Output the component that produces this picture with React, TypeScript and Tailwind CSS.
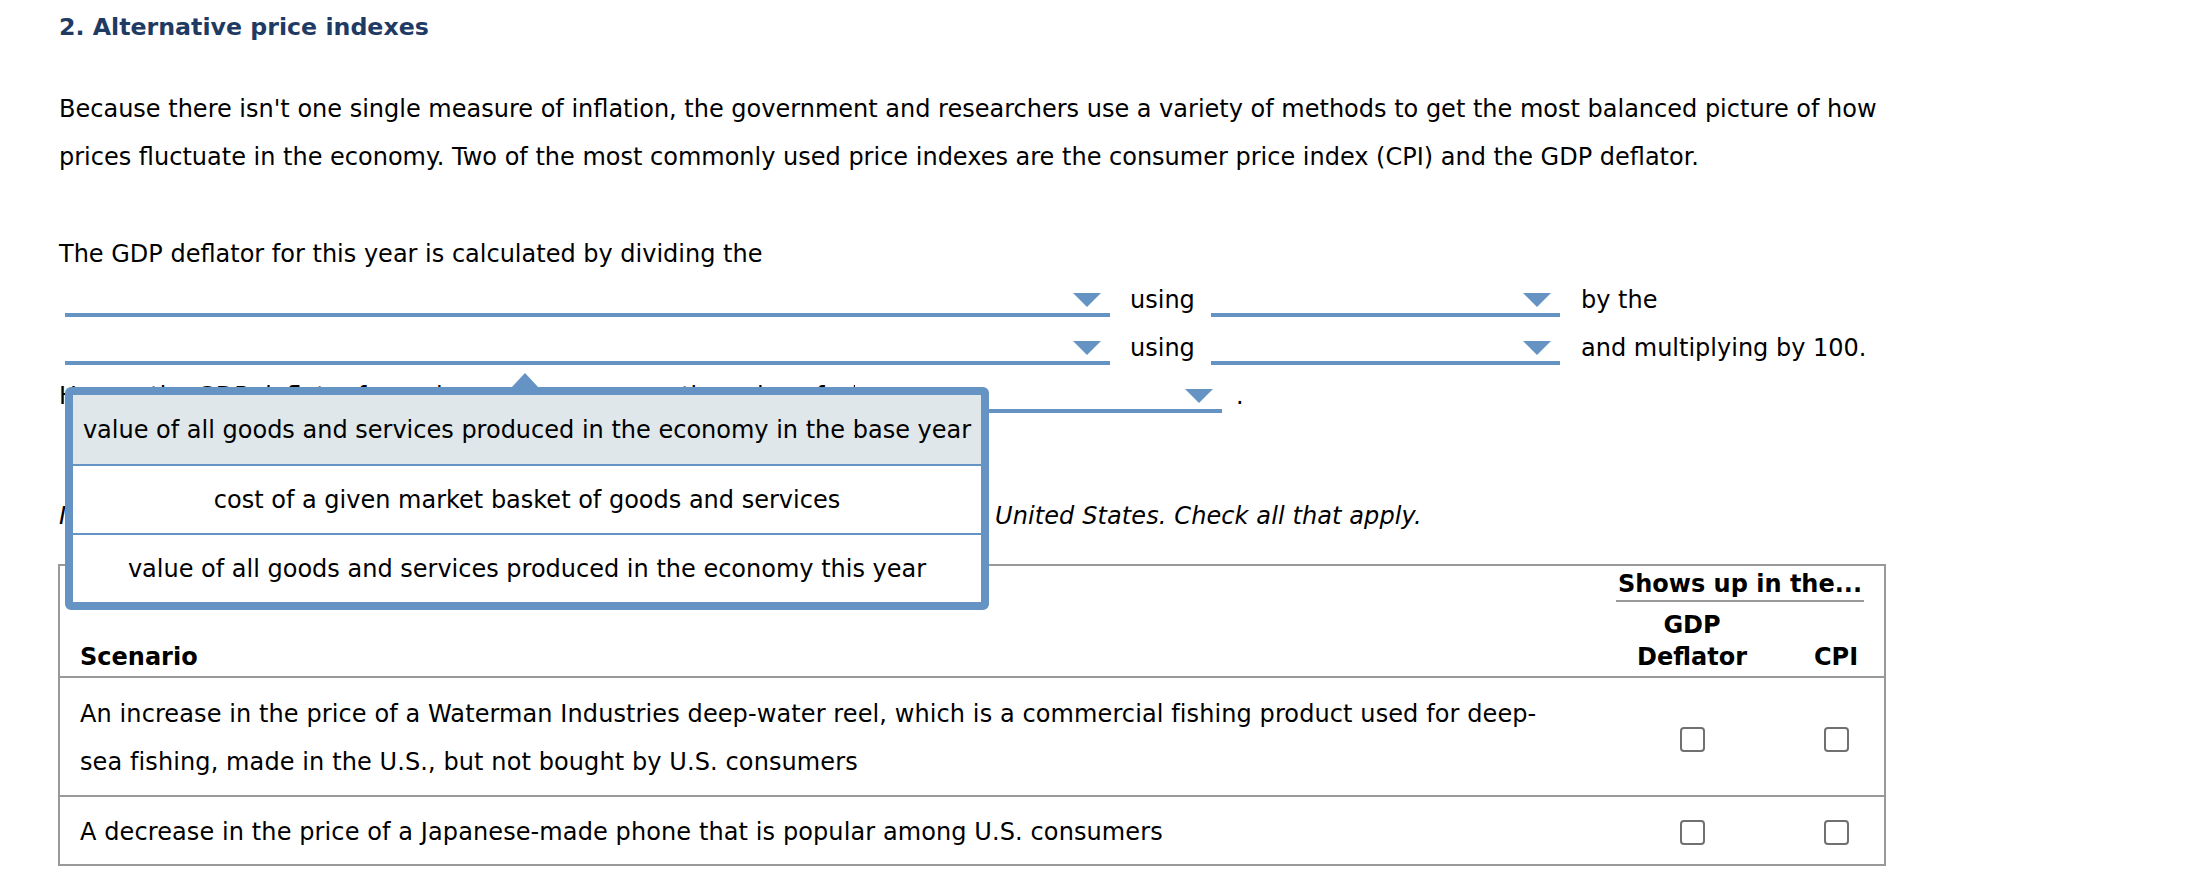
import React from "react";

const Arrow = () => (
  <svg width="28" height="14" viewBox="0 0 28 14" className="block">
    <polygon points="0,0 28,0 14,14" fill="#6593c4" />
  </svg>
);

const Dropdown = ({ className }: { className: string }) => (
  <div
    className={
      "h-[39px] shrink-0 border-b-4 border-[#6593c4] flex items-end justify-end pr-[9px] pb-[6px] " +
      className
    }
  >
    <Arrow />
  </div>
);

const Checkbox = () => (
  <div className="w-[25px] h-[25px] border-2 border-[#707070] rounded-[4px] bg-white" />
);

export default function App() {
  return (
    <div className="relative w-[2200px] h-[878px] overflow-hidden bg-white text-black font-['DejaVu_Sans',sans-serif] text-[24px]">
      <div className="pl-[59px]">
        <h2 className="pt-[3px] leading-[48px] font-bold text-[23.7px] text-[#1f3b64]">
          2. Alternative price indexes
        </h2>

        <div className="mt-[34px] leading-[48px]">
          <div className="whitespace-nowrap">
            Because there isn't one single measure of inflation, the government and researchers use a variety of methods to get the most balanced picture of how
          </div>
          <div className="whitespace-nowrap">
            prices fluctuate in the economy. Two of the most commonly used price indexes are the consumer price index (CPI) and the GDP deflator.
          </div>
        </div>

        <div className="mt-[49px] leading-[48px]">
          The GDP deflator for this year is calculated by dividing the
        </div>

        <div className="flex h-[48px] items-start">
          <Dropdown className="ml-[6px] w-[1045px]" />
          <span className="ml-[20px] w-[81px] leading-[44px]">using</span>
          <Dropdown className="w-[349px]" />
          <span className="ml-[21px] leading-[44px] whitespace-nowrap">by the</span>
        </div>

        <div className="flex h-[48px] items-start">
          <Dropdown className="ml-[6px] w-[1045px]" />
          <span className="ml-[20px] w-[81px] leading-[44px]">using</span>
          <Dropdown className="w-[349px]" />
          <span className="ml-[21px] leading-[44px] whitespace-nowrap">
            and multiplying by 100.
          </span>
        </div>

        <div className="flex h-[48px] items-start">
          <span className="inline-block w-[796px] overflow-hidden whitespace-nowrap leading-[44px]">
            Hence, the GDP deflator for a given year compares the value of what is
          </span>
          <Dropdown className="ml-[18px] w-[349px]" />
          <span className="ml-[14px] leading-[44px]">.</span>
        </div>

        <div className="mt-[70px] leading-[48px] italic flex whitespace-nowrap">
          <span className="inline-block w-[930px] overflow-hidden">
            Indicate whether each of the following scenarios shows up in the GDP deflator or the CPI for the
          </span>
          <span className="ml-[6px] tracking-[0.1px]">United States. Check all that apply.</span>
        </div>

        <div className="mt-[24px] ml-[-1px] w-[1828px] border-2 border-[#999999]">
          <div className="grid grid-cols-[1fr_152px_96px] pl-[20px] pr-[20px] pt-[2px] pb-[3px] border-b-2 border-[#999999] font-bold">
            <div />
            <div className="col-span-2 text-center leading-[32px] border-b-2 border-[#999999] whitespace-nowrap">
              Shows up in the...
            </div>
            <div className="self-end leading-[32px]">Scenario</div>
            <div className="mt-[7px] text-center leading-[32px]">
              GDP
              <br />
              Deflator
            </div>
            <div className="self-end text-center pl-[40px] leading-[32px]">CPI</div>
          </div>

          <div className="grid grid-cols-[1fr_152px_96px] items-center pl-[20px] pr-[20px] pt-[12px] pb-[9px] border-b-2 border-[#999999]">
            <div className="leading-[48px] whitespace-nowrap tracking-[0.1px]">
              An increase in the price of a Waterman Industries deep-water reel, which is a commercial fishing product used for deep-
              <br />
              sea fishing, made in the U.S., but not bought by U.S. consumers
            </div>
            <div className="flex justify-center pt-[2px]">
              <Checkbox />
            </div>
            <div className="flex justify-center pl-[40px] pt-[2px]">
              <Checkbox />
            </div>
          </div>

          <div className="grid grid-cols-[1fr_152px_96px] items-center pl-[20px] pr-[20px] pt-[11px] pb-[8px]">
            <div className="leading-[48px] whitespace-nowrap tracking-[0.1px]">
              A decrease in the price of a Japanese-made phone that is popular among U.S. consumers
            </div>
            <div className="flex justify-center">
              <Checkbox />
            </div>
            <div className="flex justify-center pl-[40px]">
              <Checkbox />
            </div>
          </div>
        </div>
      </div>

      {/* Open dropdown menu overlay */}
      <svg
        width="28"
        height="15"
        viewBox="0 0 28 15"
        className="absolute left-[511px] top-[373px]"
      >
        <polygon points="14,0 28,15 0,15" fill="#6593c4" />
      </svg>
      <div className="absolute left-[65px] top-[387px] w-[924px] h-[223px] border-[8px] border-[#6593c4] rounded-[6px] bg-white flex flex-col">
        <div className="h-[69px] bg-[#dfe7ea] flex items-center justify-center leading-[48px] whitespace-nowrap">
          value of all goods and services produced in the economy in the base year
        </div>
        <div className="h-[69px] border-t-2 border-[#6593c4] flex items-center justify-center leading-[48px] whitespace-nowrap">
          cost of a given market basket of goods and services
        </div>
        <div className="h-[69px] border-t-2 border-[#6593c4] flex items-center justify-center leading-[48px] whitespace-nowrap">
          value of all goods and services produced in the economy this year
        </div>
      </div>
    </div>
  );
}
